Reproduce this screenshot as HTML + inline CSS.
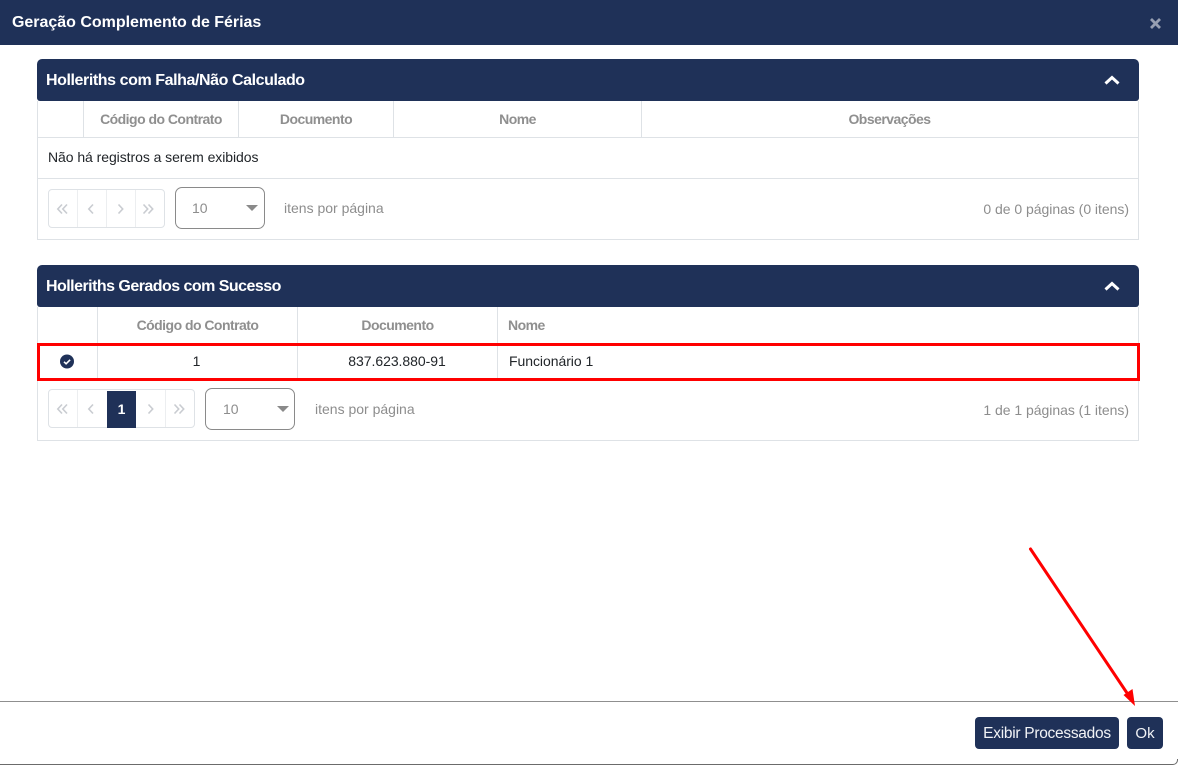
<!DOCTYPE html>
<html lang="pt-BR">
<head>
<meta charset="utf-8">
<title>Geração Complemento de Férias</title>
<style>
html,body{margin:0;padding:0;background:#fff}
#p{position:relative;width:1178px;height:765px;overflow:hidden;background:#fff;font-family:"Liberation Sans",sans-serif;font-size:14px;color:#212529}
#p div{position:absolute;box-sizing:border-box}
.t{white-space:nowrap;line-height:18px;height:18px}
.c{text-align:center}
.bar{background:#1f3158;border-radius:5px 5px 3px 3px;left:37px;width:1102px;height:42px}
.h{color:#8f8f8f;font-weight:bold;font-size:14px;letter-spacing:-.53px}
.w{color:#fff;font-weight:bold}
.g{color:#8d8d8d}
.v{background:#dee2e6;width:1px}
.l{background:#dee2e6;height:1px}
.sel{border:1px solid #8a8a8a;border-radius:7px;height:42px;width:90px}
.pg{border:1px solid #dee2e6;border-radius:4px;height:39px}
.tri{width:0;height:0;border-left:6px solid transparent;border-right:6px solid transparent;border-top:6px solid #8a8a8a}
.btn{background:#1f3158;border-radius:4px;height:32px;top:717px;color:#f1f3f6;text-align:center;line-height:33px;font-size:15px}
</style>
</head>
<body>
<div id="p">
  <div style="left:0;top:0;width:1178px;height:45px;background:#1f3158"></div>
  <div class="t w" style="left:12px;top:14px;font-size:16px;letter-spacing:-.02px">Geração Complemento de Férias</div>
  <svg style="position:absolute;left:1149px;top:17px" width="13" height="13" viewBox="0 0 13 13"><path d="M2 2 11 11M11 2 2 11" stroke="#979fb1" stroke-width="2.800" fill="none"/></svg>

  <div class="bar" style="top:59px"></div>
  <div class="t w" style="left:46px;top:72px;font-size:16px;letter-spacing:-.42px">Holleriths com Falha/Não Calculado</div>
  <svg style="position:absolute;left:1104px;top:74px" width="16" height="12" viewBox="0 0 16 12"><path d="M1.500 9.500 8 3.500 14.500 9.500" stroke="#fff" stroke-width="3" fill="none"/></svg>

  <div class="v" style="left:37px;top:101px;height:138px"></div>
  <div class="v" style="left:1138px;top:101px;height:138px"></div>
  <div class="l" style="left:37px;top:239px;width:1102px"></div>
  <div class="l" style="left:37px;top:137px;width:1102px"></div>
  <div class="l" style="left:37px;top:178px;width:1102px"></div>
  <div class="v" style="left:83px;top:101px;height:36px"></div>
  <div class="v" style="left:238px;top:101px;height:36px"></div>
  <div class="v" style="left:393px;top:101px;height:36px"></div>
  <div class="v" style="left:641px;top:101px;height:36px"></div>
  <div class="t h c" style="left:84px;top:110px;width:154px">Código do Contrato</div>
  <div class="t h c" style="left:239px;top:110px;width:154px">Documento</div>
  <div class="t h c" style="left:394px;top:110px;width:247px">Nome</div>
  <div class="t h c" style="left:642px;top:110px;width:495px">Observações</div>
  <div class="t" style="left:48px;top:148px;letter-spacing:-.06px">Não há registros a serem exibidos</div>

  <div class="pg" style="left:48px;top:189px;width:117px">
    <div class="v" style="left:28px;top:0;height:37px;background:#eceef0"></div>
    <div class="v" style="left:57px;top:0;height:37px;background:#eceef0"></div>
    <div class="v" style="left:86px;top:0;height:37px;background:#eceef0"></div>
  </div>
  <svg style="position:absolute;left:0;top:200px" width="170" height="18" viewBox="0 0 170 18" fill="none" stroke="#c9ccd1" stroke-width="1.600">
    <path d="M62 4.500 57.800 9 62 13.500M67 4.500 62.800 9 67 13.500"/>
    <path d="M93 4.500 88.800 9 93 13.500"/>
    <path d="M118.500 4.500 122.700 9 118.500 13.500"/>
    <path d="M143.500 4.500 147.700 9 143.500 13.500M148.500 4.500 152.700 9 148.500 13.500"/>
  </svg>
  <div class="sel" style="left:175px;top:187px"></div>
  <div class="t g" style="left:192px;top:199px">10</div>
  <div class="tri" style="left:246px;top:205px"></div>
  <div class="t g" style="left:284px;top:199px;letter-spacing:0">itens por página</div>
  <div class="t g" style="right:49px;top:200px;letter-spacing:-.03px">0 de 0 páginas (0 itens)</div>

  <div class="bar" style="top:265px"></div>
  <div class="t w" style="left:46px;top:278px;font-size:16px;letter-spacing:-.53px">Holleriths Gerados com Sucesso</div>
  <svg style="position:absolute;left:1104px;top:280px" width="16" height="12" viewBox="0 0 16 12"><path d="M1.500 9.500 8 3.500 14.500 9.500" stroke="#fff" stroke-width="3" fill="none"/></svg>

  <div class="v" style="left:37px;top:307px;height:134px"></div>
  <div class="v" style="left:1138px;top:307px;height:134px"></div>
  <div class="l" style="left:37px;top:440px;width:1102px"></div>
  <div class="v" style="left:97px;top:307px;height:72px"></div>
  <div class="v" style="left:297px;top:307px;height:72px"></div>
  <div class="v" style="left:497px;top:307px;height:72px"></div>
  <div class="t h c" style="left:98px;top:316px;width:199px">Código do Contrato</div>
  <div class="t h c" style="left:298px;top:316px;width:199px">Documento</div>
  <div class="t h" style="left:508px;top:316px">Nome</div>

  <svg style="position:absolute;left:60px;top:354px" width="15" height="15" viewBox="0 0 15 15"><circle cx="7" cy="7.500" r="7" fill="#1f3158"/><path d="M4 7.800 6.100 9.800 10.100 5.800" stroke="#fff" stroke-width="1.600" fill="none"/></svg>
  <div class="t c" style="left:97px;top:352px;width:199px">1</div>
  <div class="t c" style="left:298px;top:352px;width:198px;letter-spacing:-.05px">837.623.880-91</div>
  <div class="t" style="left:509px;top:352px;letter-spacing:-.05px">Funcionário 1</div>
  <div style="left:37px;top:343px;width:1103px;height:38px;border:3px solid #f00"></div>

  <div class="pg" style="left:48px;top:389px;width:147px">
    <div class="v" style="left:28px;top:0;height:37px;background:#eceef0"></div>
    <div style="left:58px;top:1px;width:29px;height:37px;background:#1f3158;color:#fff;font-weight:bold;text-align:center;line-height:37px;font-size:14px">1</div>
    <div class="v" style="left:116px;top:0;height:37px;background:#eceef0"></div>
  </div>
  <svg style="position:absolute;left:0;top:400px" width="200" height="18" viewBox="0 0 200 18" fill="none" stroke="#c9ccd1" stroke-width="1.600">
    <path d="M62 4.500 57.800 9 62 13.500M67 4.500 62.800 9 67 13.500"/>
    <path d="M93 4.500 88.800 9 93 13.500"/>
    <path d="M148.500 4.500 152.700 9 148.500 13.500"/>
    <path d="M174.500 4.500 178.700 9 174.500 13.500M179.500 4.500 183.700 9 179.500 13.500"/>
  </svg>
  <div class="sel" style="left:205px;top:388px"></div>
  <div class="t g" style="left:223px;top:400px">10</div>
  <div class="tri" style="left:277px;top:406px"></div>
  <div class="t g" style="left:315px;top:400px;letter-spacing:0">itens por página</div>
  <div class="t g" style="right:49px;top:401px;letter-spacing:-.03px">1 de 1 páginas (1 itens)</div>

  <div style="left:0;top:701px;width:1178px;height:1px;background:#8f8f8f"></div>
  <div class="btn" style="left:975px;width:144px;letter-spacing:-.28px;font-size:15.500px">Exibir Processados</div>
  <div class="btn" style="left:1127px;width:36px">Ok</div>
  <div style="left:-10px;top:759px;width:1188px;height:6px;border-bottom:1px solid #6b6b6b;border-right:1px solid #6b6b6b;border-bottom-right-radius:5px"></div>

  <svg style="position:absolute;left:0;top:0;pointer-events:none" width="1178" height="765" viewBox="0 0 1178 765">
    <path d="M1030.500 549 1127 693" stroke="#f00" stroke-width="3" fill="none" stroke-linecap="round"/>
    <path d="M1135 706 1123.500 695 1132.500 689Z" fill="#f00"/>
  </svg>
</div>
</body>
</html>
